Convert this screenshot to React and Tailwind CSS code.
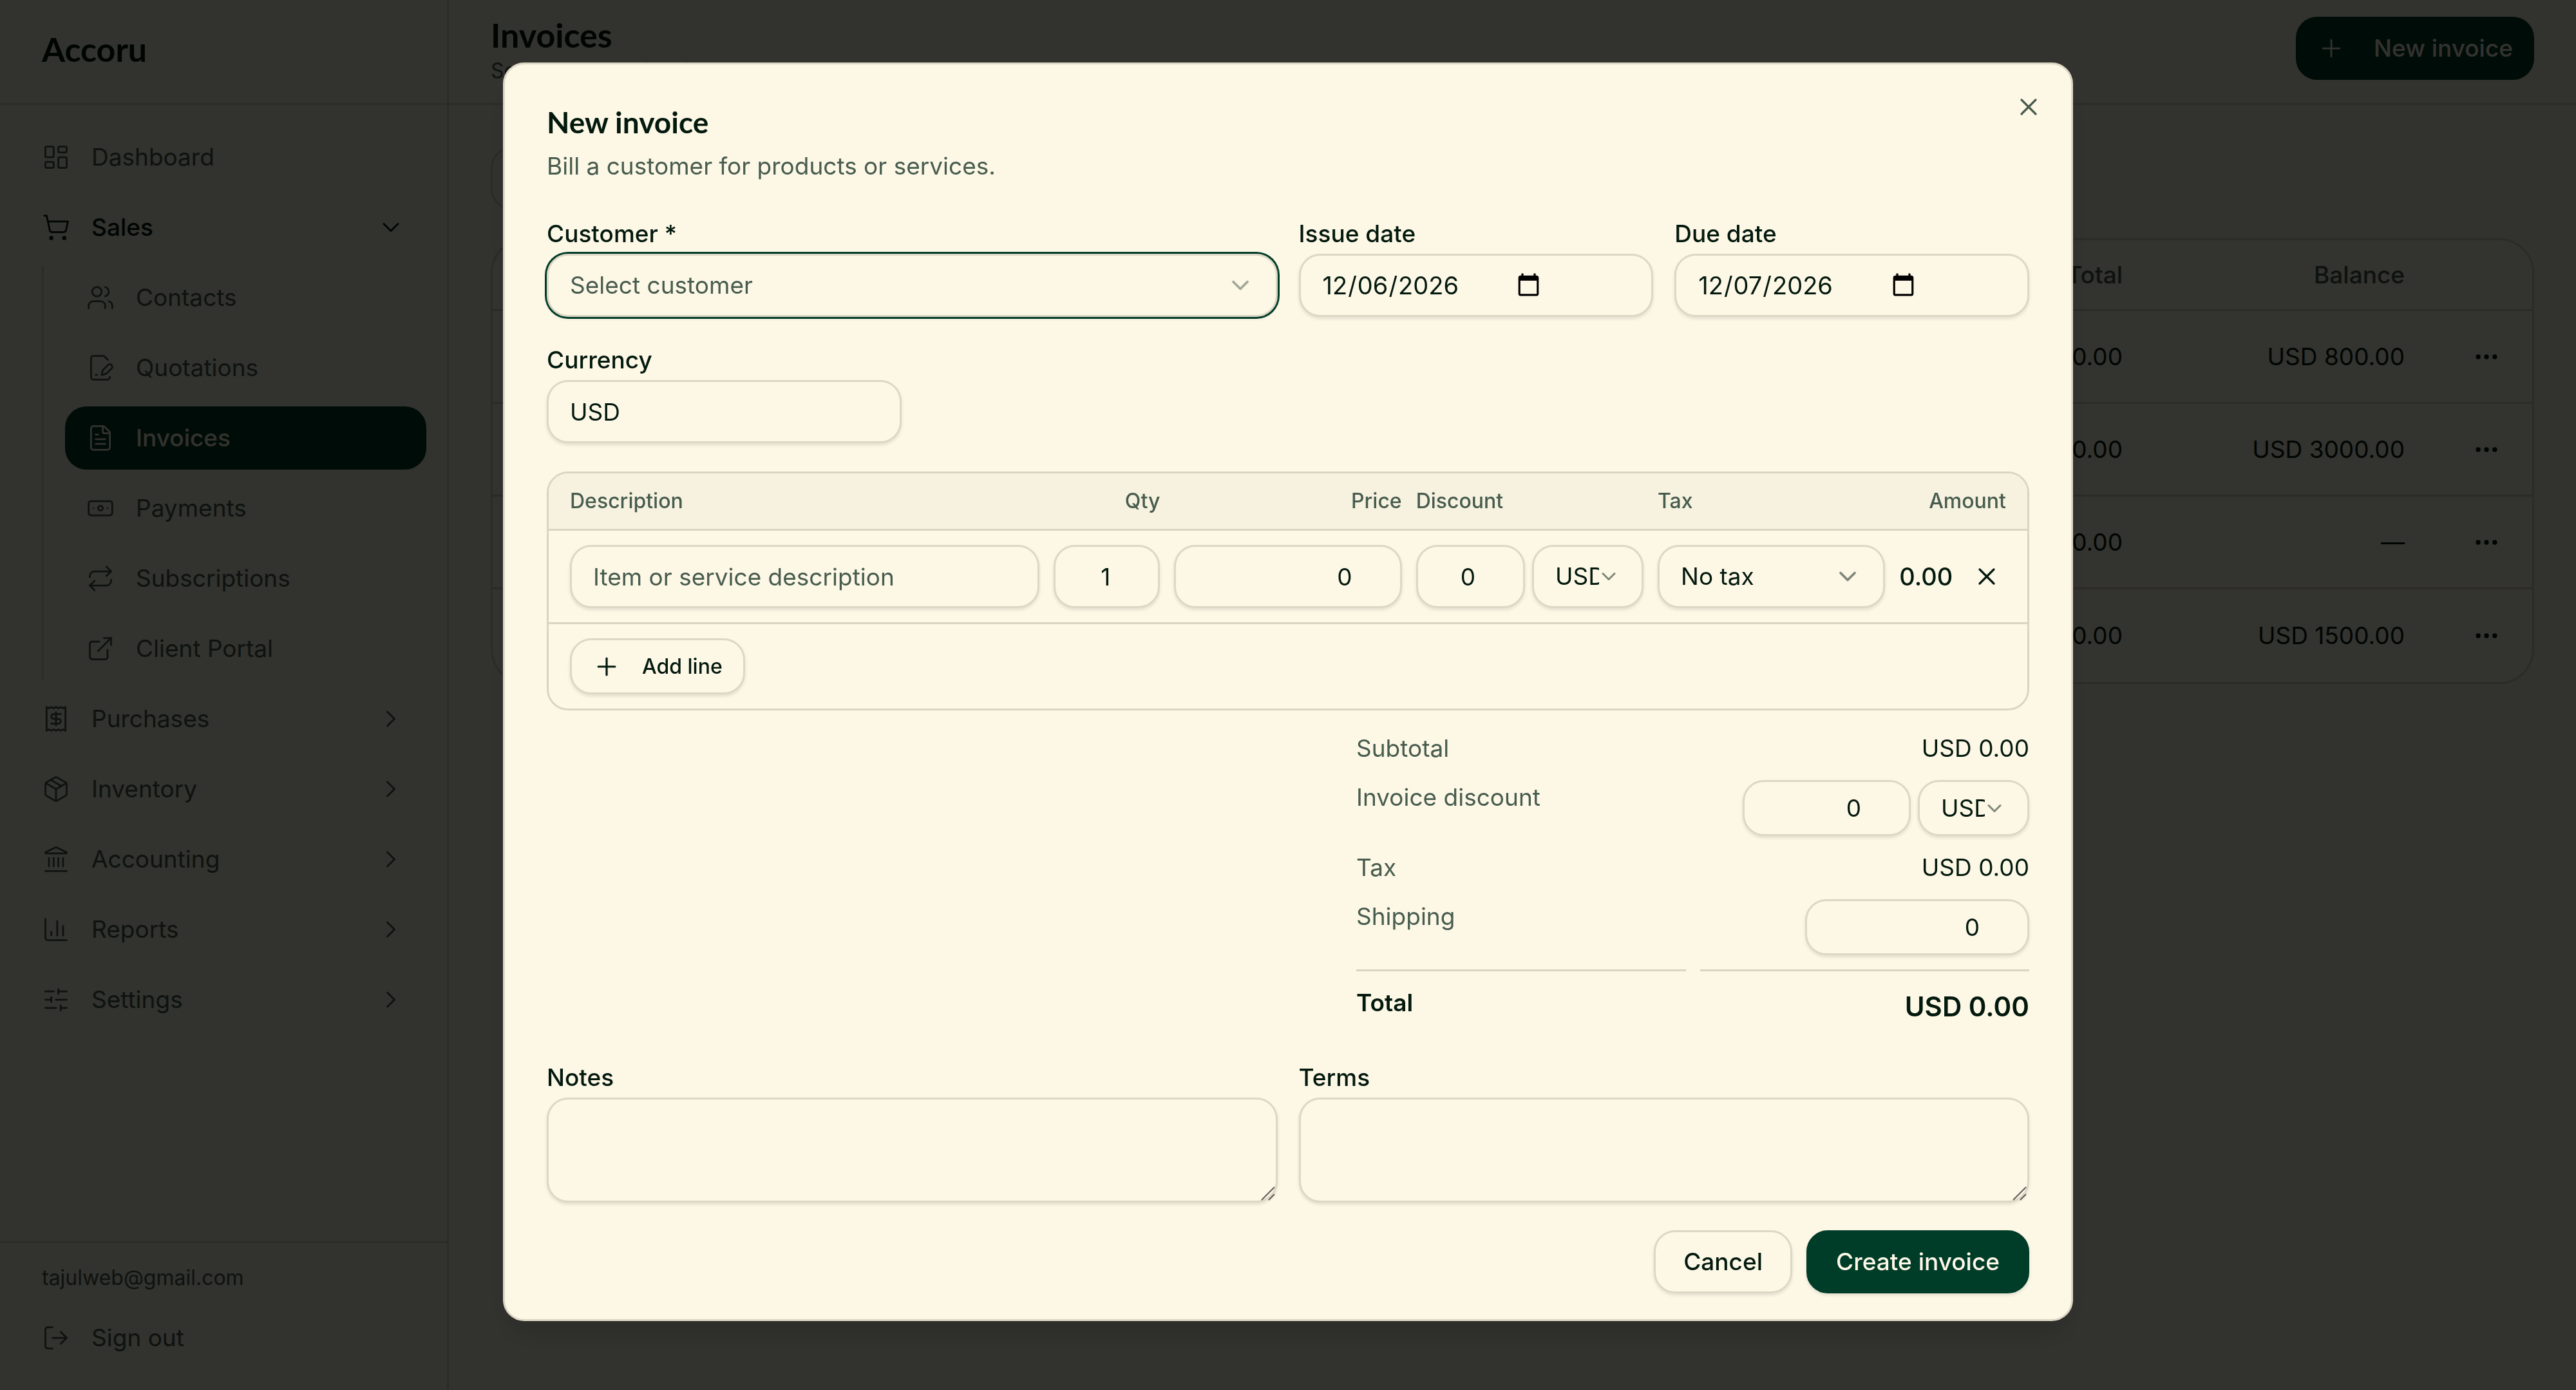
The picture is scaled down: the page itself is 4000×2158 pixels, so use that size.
import { useState } from 'react';
import {
  Banknote, ChartColumn, ChevronDown, ChevronRight, Ellipsis, ExternalLink, FilePenLine, FileText,
  Landmark, LayoutDashboard, LogOut, Package, Plus, Receipt, Repeat, ShoppingCart,
  SlidersHorizontal, Users, X,
} from 'lucide-react';

const salesLinks = [
  { label: "Contacts", icon: Users },
  { label: "Quotations", icon: FilePenLine },
  { label: "Invoices", icon: FileText, active: true },
  { label: "Payments", icon: Banknote },
  { label: "Subscriptions", icon: Repeat },
  { label: "Client Portal", icon: ExternalLink },
];

const sections = [
  { label: "Purchases", icon: Receipt },
  { label: "Inventory", icon: Package },
  { label: "Accounting", icon: Landmark },
  { label: "Reports", icon: ChartColumn },
  { label: "Settings", icon: SlidersHorizontal },
];

const invoices = [
  { total: "USD 800.00", balance: "USD 800.00" },
  { total: "USD 3000.00", balance: "USD 3000.00" },
  { total: "USD 500.00", balance: "—" },
  { total: "USD 1500.00", balance: "USD 1500.00" },
];

const control = "block w-full rounded-[33px] border-[3px] border-[#ddd7c5] bg-[#fdf7e6] pl-[33px] shadow-[0_3px_5px_0_rgb(0_0_0/0.1)] outline-none placeholder:text-[#475c4e] placeholder:opacity-100";
const numeric = "pr-[74px] text-right [appearance:textfield] [&::-webkit-inner-spin-button]:appearance-none";
const dateInput = "text-[38px] [&::-webkit-datetime-edit]:flex-none [&::-webkit-calendar-picker-indicator]:ml-[16px] [&::-webkit-calendar-picker-indicator]:h-[41px] [&::-webkit-calendar-picker-indicator]:w-[41px] [&::-webkit-calendar-picker-indicator]:p-0";
const navItem = "flex h-[98px] w-full items-center gap-[33px] rounded-[33px] px-[33px]";

const Sidebar = () => (
  <aside className="flex w-[697px] shrink-0 flex-col border-r-[3px] border-[#dad5c3] text-[#475a4c]">
    <div className="flex h-[163px] items-center border-b-[3px] border-[#dad5c3] px-[65px] pb-[8px]">
      <span className="font-[Lato,sans-serif] text-[52px] font-bold text-[#03190e]">Accoru</span>
    </div>

    <nav className="flex flex-1 flex-col gap-[11px] px-[32px] py-[32px]">
      <a href="#dashboard" className={navItem}>
        <LayoutDashboard size={44} strokeWidth={1.5} />
        Dashboard
      </a>
      <div className="flex flex-col gap-[11px]">
        <button className={`${navItem} font-medium text-[#03190e]`}>
          <ShoppingCart size={44} strokeWidth={1.5} />
          <span className="flex-1 text-left">Sales</span>
          <ChevronDown size={44} strokeWidth={1.5} />
        </button>
        <ul className="ml-[33px] flex flex-col gap-[11px] border-l-[3px] border-[#dad5c3] pl-[33px]">
          {salesLinks.map(({ label, icon: Icon, active }) => (
            <li key={label}>
              <a href="#sales" className={`${navItem} ${active ? "bg-[#003d29] font-medium text-[#fef8e8]" : ""}`}>
                <Icon size={44} strokeWidth={1.5} />
                {label}
              </a>
            </li>
          ))}
        </ul>
      </div>
      {sections.map(({ label, icon: Icon }) => (
        <button key={label} className={navItem}>
          <Icon size={44} strokeWidth={1.5} />
          <span className="flex-1 text-left">{label}</span>
          <ChevronRight size={44} strokeWidth={1.5} />
        </button>
      ))}
    </nav>

    <div className="flex flex-col gap-[22px] border-t-[3px] border-[#dad5c3] px-[32px] py-[32px]">
      <p className="px-[33px] text-[32px] leading-[44px]">tajulweb@gmail.com</p>
      <button className={navItem}>
        <LogOut size={44} strokeWidth={1.5} />
        Sign out
      </button>
    </div>
  </aside>
);

const InvoiceList = () => (
  <main className="flex-1">
    <header className="flex h-[163px] items-start justify-between border-b-[3px] border-[#dad5c3] px-[65px] pt-[26px]">
      <div>
        <h1 className="font-[Lato,sans-serif] text-[52px] leading-[57px] font-bold text-[#03190e]">Invoices</h1>
        <p className="text-[32px] leading-[54px] text-[#475a4c]">Send and track invoices</p>
      </div>
      <button className="flex h-[98px] items-center gap-[44px] rounded-[33px] bg-[#003d29] px-[33px] font-medium text-[#fef8e8]">
        <Plus size={44} strokeWidth={1.5} />
        New invoice
      </button>
    </header>

    <div className="flex flex-col gap-[44px] p-[65px]">
      <div className="h-[98px] w-[900px] rounded-[33px] border-[3px] border-[#dad5c3]" />
      <div className="overflow-hidden rounded-[54px] border-[3px] border-[#dad5c3] bg-[#fcfceb]">
        <table className="w-full table-fixed border-separate border-spacing-0 text-right">
          <thead>
            <tr className="text-[#475a4c]">
              <th className="h-[110px] border-b-[3px] border-[#dad5c3] px-[33px] font-medium">Total</th>
              <th className="w-[438px] border-b-[3px] border-[#dad5c3] px-[33px] font-medium">Balance</th>
              <th className="w-[165px] border-b-[3px] border-[#dad5c3]" aria-label="Actions" />
            </tr>
          </thead>
          <tbody className="text-[#03190e] [&>tr:last-child>td]:border-b-0">
            {invoices.map((inv) => (
              <tr key={inv.total}>
                <td className="h-[144px] border-b-[3px] border-[#dad5c3] px-[33px]">{inv.total}</td>
                <td className="border-b-[3px] border-[#dad5c3] px-[33px]">{inv.balance}</td>
                <td className="border-b-[3px] border-[#dad5c3] px-[33px]">
                  <button aria-label="Row actions" className="ml-auto flex size-[76px] items-center justify-center">
                    <Ellipsis size={44} strokeWidth={2} />
                  </button>
                </td>
              </tr>
            ))}
          </tbody>
        </table>
      </div>
    </div>
  </main>
);

const Field = ({ id, label, className = "", children }) => (
  <div className={className}>
    <label htmlFor={id} className="block pt-[2px] leading-[63px] font-medium">{label}</label>
    {children}
  </div>
);

// narrow selects cut the text off just before a smaller chevron
const Select = ({ id, label, options, className = "", wrap = "", small = false, placeholder = false }) => (
  <div className={`relative ${wrap} ${placeholder ? "text-[#475c4e]" : ""}`}>
    <select id={id} aria-label={label} className={`${control} appearance-none ${small ? "pr-[66px]" : "pr-[90px]"} ${className}`}>
      {options.map((o) => <option key={o}>{o}</option>)}
    </select>
    <span className="pointer-events-none absolute inset-y-0 right-[36px] flex items-center opacity-50">
      <ChevronDown size={small ? 36 : 44} strokeWidth={2} />
    </span>
  </div>
);

const TextArea = ({ id }) => (
  <div className="relative">
    <textarea id={id} className={`${control} h-[163px] resize-none py-[22px] pr-[33px]`} />
    <svg className="pointer-events-none absolute right-[4px] bottom-[3px]" width="22" height="22" viewBox="0 0 22 22" fill="none" stroke="#5c5c58" strokeWidth="2">
      <path d="M1 21 21 1M12 21l9-9" />
    </svg>
  </div>
);

const InvoiceDialog = () => {
  const [issueDate, setIssueDate] = useState("2026-12-06");
  const [dueDate, setDueDate] = useState("2026-12-07");

  return (
    <div role="dialog" aria-labelledby="dialog-title" className="relative w-full max-w-[2438px] rounded-[33px] border-[3px] border-[#dcd6c4] bg-[#fdf7e6] px-[65px] pt-[65px] pb-[40px] text-[#03190e] shadow-[0_27px_41px_-8px_rgb(0_0_0/0.15)]">
      <button aria-label="Close" className="absolute top-[44px] right-[44px] text-[#475c4e]">
        <X size={44} strokeWidth={1.75} />
      </button>

      <h2 id="dialog-title" className="font-[Lato,sans-serif] text-[46px] leading-[49px] font-bold">New invoice</h2>
      <p className="mt-[17px] leading-[54px] text-[#475c4e]">Bill a customer for products or services.</p>

      <form className="mt-[44px]" onSubmit={(e) => e.preventDefault()}>
        <div className="grid grid-cols-4 gap-[33px]">
          <Field id="customer" label="Customer *" className="col-span-2">
            <Select placeholder id="customer" label="Customer" options={["Select customer"]} className="h-[98px] ring-[3px] ring-[#003d29]" />
          </Field>
          <Field id="issue" label="Issue date">
            <input id="issue" type="date" value={issueDate} onChange={e => setIssueDate(e.target.value)} className={`${control} ${dateInput} h-[98px]`} />
          </Field>
          <Field id="due" label="Due date">
            <input id="due" type="date" value={dueDate} onChange={e => setDueDate(e.target.value)} className={`${control} ${dateInput} h-[98px]`} />
          </Field>
          <Field id="currency" label="Currency">
            <input id="currency" defaultValue="USD" className={`${control} h-[98px] pr-[33px]`} />
          </Field>
        </div>

        <div className="mt-[44px] rounded-[33px] border-[3px] border-[#dad5c3]">
          <table className="block">
            <thead className="block">
              <tr className="grid h-[89px] grid-cols-12 items-center gap-[22px] rounded-t-[30px] border-b-[3px] border-[#dad5c3] bg-[#f7f2e0] px-[33px] text-left text-[32px] text-[#475c4e]">
                <th className="col-span-4 font-medium">Description</th>
                <th className="text-right font-medium">Qty</th>
                <th className="col-span-2 text-right font-medium">Price</th>
                <th className="col-span-2 font-medium">Discount</th>
                <th className="col-span-2 font-medium">Tax</th>
                <th className="text-right font-medium">Amount</th>
              </tr>
            </thead>
            <tbody className="block">
              <tr className="grid grid-cols-12 items-center gap-[22px] border-b-[3px] border-[#dad5c3] px-[33px] py-[22px]">
                <td className="col-span-4">
                  <input aria-label="Description" placeholder="Item or service description" className={`${control} h-[98px] pr-[33px]`} />
                </td>
                <td>
                  <input aria-label="Quantity" type="number" defaultValue="1" className={`${control} ${numeric} h-[98px]`} />
                </td>
                <td className="col-span-2">
                  <input aria-label="Price" type="number" defaultValue="0" className={`${control} ${numeric} h-[98px]`} />
                </td>
                <td className="col-span-2 flex gap-[11px]">
                  <input aria-label="Discount" type="number" defaultValue="0" className={`${control} ${numeric} h-[98px] min-w-0 flex-1`} />
                  <Select small label="Discount type" options={["USD", "%"]} wrap="w-[173px]" className="h-[98px]" />
                </td>
                <td className="col-span-2">
                  <Select label="Tax" options={["No tax"]} className="h-[98px]" />
                </td>
                <td className="flex items-center justify-between text-[38px] font-medium">
                  0.00
                  <button type="button" aria-label="Remove line" className="flex w-[60px] justify-center">
                    <X size={44} strokeWidth={1.75} />
                  </button>
                </td>
              </tr>
            </tbody>
          </table>
          <div className="px-[33px] py-[22px]">
            <button type="button" className="flex h-[87px] items-center gap-[33px] rounded-[33px] border-[3px] border-[#ddd7c5] bg-[#fdf7e6] px-[32px] text-[32px] font-medium shadow-[0_3px_5px_0_rgb(0_0_0/0.1)]">
              <Plus size={44} strokeWidth={1.75} />
              Add line
            </button>
          </div>
        </div>

        <div className="mt-[32px] ml-auto grid max-w-[1045px] grid-cols-2 gap-[22px] leading-[54px]">
          <span className="text-[#475c4e]">Subtotal</span>
          <span className="text-right">USD 0.00</span>

          <label htmlFor="discount" className="text-[#475c4e]">Invoice discount</label>
          <div className="flex justify-end gap-[11px]">
            <input id="discount" type="number" defaultValue="0" className={`${control} ${numeric} h-[87px] max-w-[261px]`} />
            <Select small label="Invoice discount type" options={["USD", "%"]} wrap="w-[173px] shrink-0" className="h-[87px]" />
          </div>

          <span className="text-[#475c4e]">Tax</span>
          <span className="text-right">USD 0.00</span>

          <label htmlFor="shipping" className="text-[#475c4e]">Shipping</label>
          <input id="shipping" type="number" defaultValue="0" className={`${control} ${numeric} ml-auto h-[87px] max-w-[348px]`} />

          <span className="border-t-[3px] border-[#dad5c3] pt-[22px] font-semibold">Total</span>
          <span className="border-t-[3px] border-[#dad5c3] pt-[22px] text-right text-[42px] leading-[65px] font-semibold">USD 0.00</span>
        </div>

        <div className="mt-[44px] grid grid-cols-2 gap-[33px]">
          <Field id="notes" label="Notes">
            <TextArea id="notes" />
          </Field>
          <Field id="terms" label="Terms">
            <TextArea id="terms" />
          </Field>
        </div>

        <div className="mt-[43px] flex justify-end gap-[22px]">
          <button type="button" className="h-[98px] rounded-[33px] border-[3px] border-[#ddd7c5] px-[43px] font-medium shadow-[0_3px_5px_0_rgb(0_0_0/0.1)]">Cancel</button>
          <button type="submit" className="h-[98px] rounded-[33px] border-[3px] border-[#003d29] bg-[#003d29] px-[43px] font-medium text-[#fef8e8] shadow-[0_3px_5px_0_rgb(0_0_0/0.1)]">Create invoice</button>
        </div>
      </form>
    </div>
  );
};

const App = () => (
  <div className="bg-[#f8f8e6] font-[Inter,sans-serif] text-[37px] leading-[54px]">
    <div className="flex min-h-screen">
      <Sidebar />
      <InvoiceList />
    </div>
    <div className="fixed inset-0 flex items-start justify-center bg-black/80 pt-[97px]">
      <InvoiceDialog />
    </div>
  </div>
);

export default App;
